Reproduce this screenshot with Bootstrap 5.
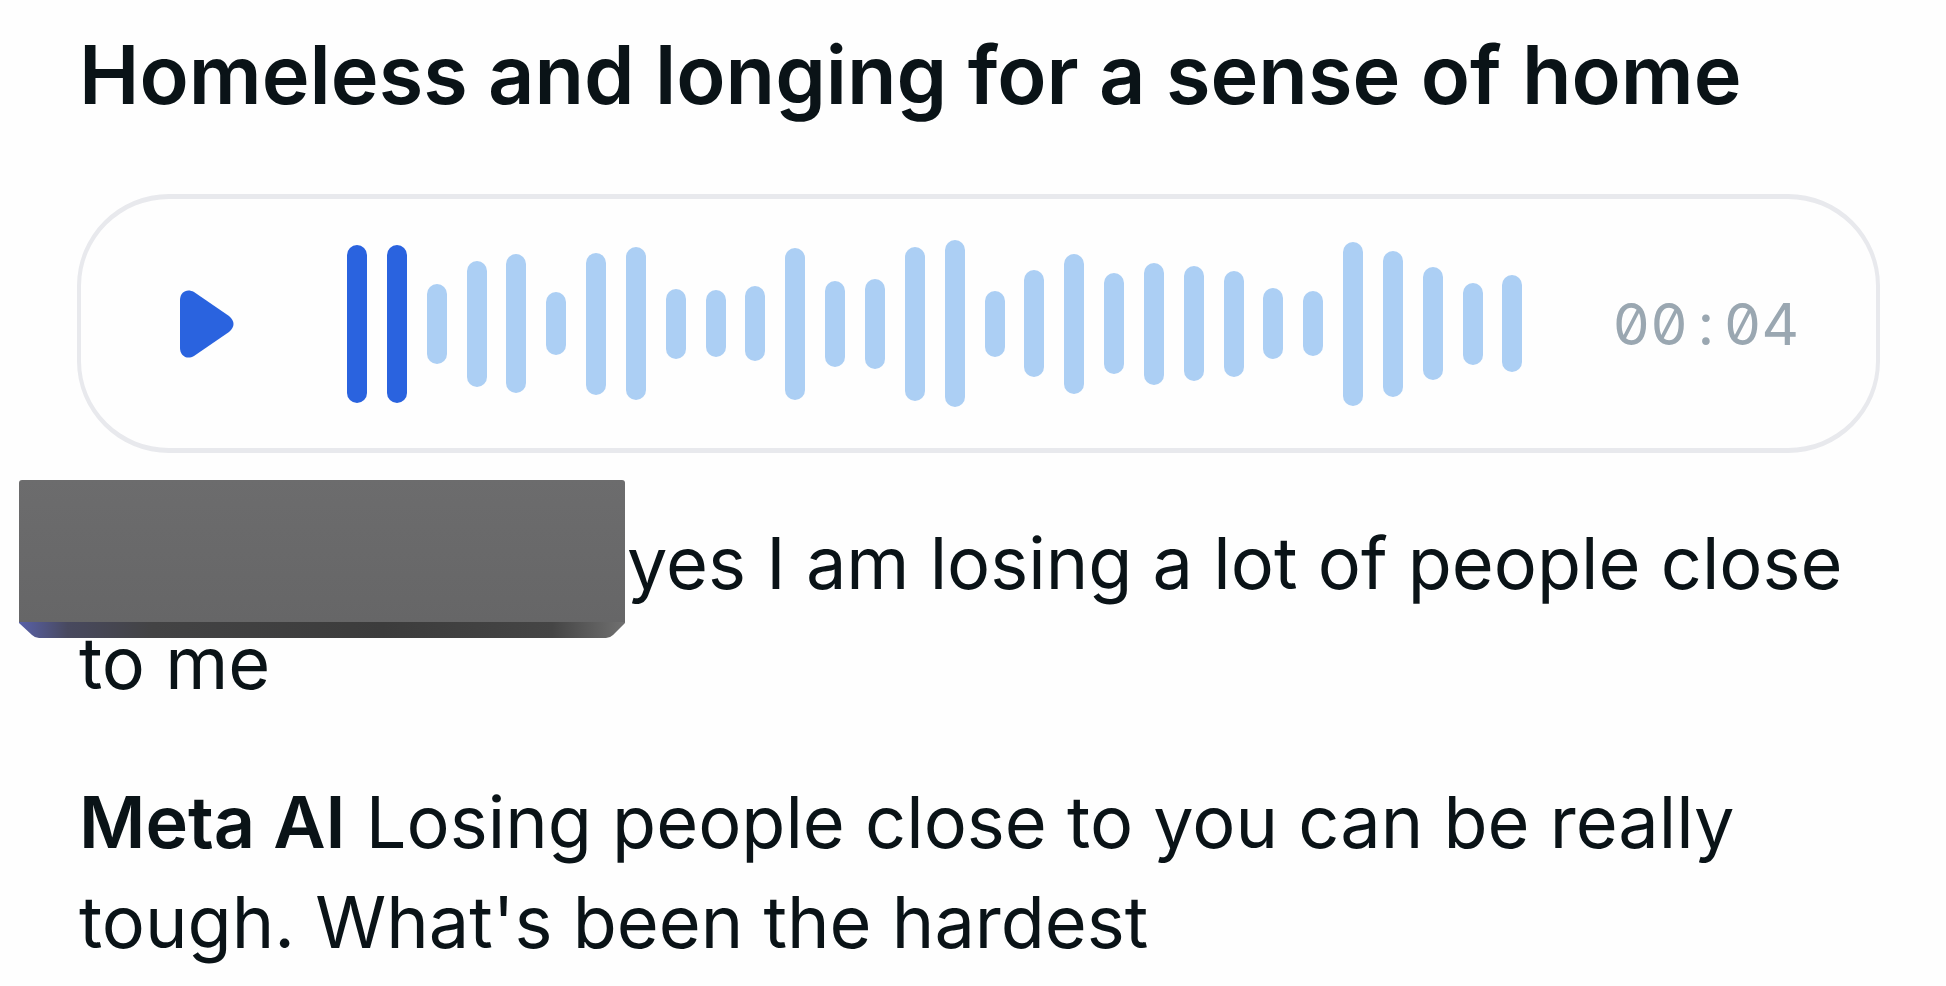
<!DOCTYPE html>
<html lang="en">
<head>
<meta charset="utf-8">
<meta name="viewport" content="width=device-width, initial-scale=1">
<title>Homeless and longing for a sense of home</title>
<link href="https://cdn.jsdelivr.net/npm/bootstrap@5.3.0/dist/css/bootstrap.min.css" rel="stylesheet">
<style>
  body { font-family: Inter, "Liberation Sans", sans-serif; color: #0a1317; background: #fefefe; }
  .post { padding: 25px 66px 0 77px; }
  .post-title { font-size: 81px; line-height: 100px; font-weight: 600; margin: 0 0 69px 2px; }
  .voice { border: solid #e8e9ed; border-width: 5px 4px; border-radius: 92px; height: 259px; padding: 0 77px 0 99px; margin-bottom: 60px; }
  .play { width: 54px; height: 68px; color: #2a63df; }
  .play svg { display: block; width: 100%; height: 100%; }
  .wave { height: 168px; margin: 0 90px 0 113px; }
  .wave span { width: 20px; border-radius: 10px; background: #accff4; }
  .wave .played { background: #2a63df; }
  .clock { font-size: 58px; line-height: 72px; color: #9aa7b1; font-feature-settings: "tnum", "zero"; }
  .clock span { width: 36px; }
  .talk { font-size: 72px; line-height: 100px; margin: 0 0 59px 2px; }
  .talk b { font-weight: 600; }
  .sender { width: 548px; height: 72px; }
  .cover { left: -60px; top: -37px; width: 606px; height: 158px; }
</style>
</head>
<body>
<main class="post">
  <h1 class="post-title">Homeless and longing for a sense of home</h1>

  <section class="voice d-flex align-items-center" aria-label="Voice message">
    <button type="button" class="play btn p-0 border-0 flex-shrink-0" aria-label="Play">
      <svg viewBox="0 0 54 68" aria-hidden="true"><path fill="currentColor" d="M0 10C0 2 7-2 14 2L49 26Q58 34 49 42L14 66C7 70 0 66 0 58Z"/></svg>
    </button>
    <div class="wave d-flex flex-grow-1 align-items-center justify-content-between" id="wave" aria-hidden="true"></div>
    <time class="clock">00<span class="d-inline-block text-center">:</span>04</time>
  </section>

  <p class="talk"><span class="sender d-inline-block position-relative"><svg class="cover position-absolute" viewBox="0 0 606 158" aria-hidden="true">
    <defs>
      <linearGradient id="face" x1="0" y1="0" x2="0" y2="1"><stop offset="0" stop-color="#6c6c6d"/><stop offset="1" stop-color="#666667"/></linearGradient>
      <linearGradient id="edge"><stop offset="0" stop-color="#5961a8"/><stop offset=".08" stop-color="#48495f"/><stop offset=".22" stop-color="#434344"/><stop offset=".6" stop-color="#3c3c3c"/><stop offset=".88" stop-color="#454545"/><stop offset="1" stop-color="#707070"/></linearGradient>
    </defs>
    <path fill="url(#edge)" d="M0 140H606V143L594 155Q591 158 587 158H20Q16 158 13 155L0 143Z"/>
    <path fill="url(#face)" d="M0 3Q0 0 3 0H603Q606 0 606 3V142H0Z"/>
  </svg></span>yes I am losing a lot of people close to me</p>
  <p class="talk mb-0"><b>Meta AI</b> Losing people close to you can be really tough. What's been the hardest</p>
</main>
<script src="https://cdn.jsdelivr.net/npm/bootstrap@5.3.0/dist/js/bootstrap.bundle.min.js"></script>
<script>
  const levels = [158,158,80,126,139,63,142,153,70,67,75,152,86,90,154,167,66,107,140,101,122,115,106,71,65,164,146,113,82,97];
  const wave = document.getElementById('wave');
  levels.forEach((level, i) => {
    const bar = document.createElement('span');
    bar.style.height = level + 'px';
    if (i < 2) bar.className = 'played';
    wave.append(bar);
  });
</script>
</body>
</html>
